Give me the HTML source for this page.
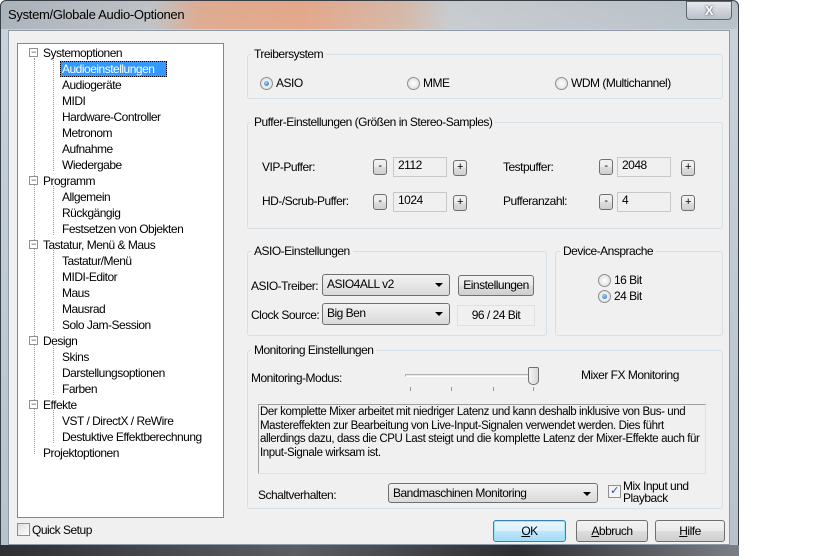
<!DOCTYPE html>
<html><head><meta charset="utf-8"><style>
*{box-sizing:border-box;margin:0;padding:0}
body{width:819px;height:556px;background:#fff;font-family:"Liberation Sans",sans-serif;font-size:12px;color:#000;position:relative;overflow:hidden;letter-spacing:-0.5px}
.a{position:absolute;white-space:nowrap}
#frame{left:0;top:0;width:739px;height:556px;background:linear-gradient(180deg,#a9b4bf 0,#c9d2db 30px,#b7c2cc 100%);border:1px solid #3a3f46;border-radius:6px 6px 0 0}
#tbar{left:1px;top:1px;width:736px;height:28px;background:linear-gradient(90deg,#a9b1b9 0,#c0c3c6 150px,#e3a98b 200px,#e8a584 300px,#d9b7a4 400px,#c9cdd0 450px,#b8c0c8 100%);opacity:.9;border-radius:6px 6px 0 0}
#bot{left:0;top:545px;width:739px;height:11px;background:linear-gradient(90deg,#2d2f33,#5a5e63 40%,#2d2f33 70%,#7a7f85)}
#client{left:8px;top:30px;width:722px;height:515px;background:#f0f0f0;border:1px solid #8e9aa6}
#close{left:686px;top:1px;width:46px;height:19px;border:1px solid #5c6670;border-radius:0 0 4px 4px;background:linear-gradient(#e6e9ec,#b8c0c8);color:#fff;font-weight:bold;text-align:center;line-height:17px;font-size:13px;text-shadow:0 0 2px #333}
#tree{left:17px;top:43px;width:207px;height:475px;background:#fff;border:1px solid #828790}
.exp{position:absolute;width:9px;height:9px;border:1px solid #919191;background:#fff;font-size:9px;line-height:6px;text-align:center;color:#333}
.g{position:absolute;border:1px solid #d5dfe5;border-radius:3px}
.gl{position:absolute;background:#f0f0f0;padding:0 3px}
.rad{position:absolute;width:13px;height:13px;border-radius:50%;border:1px solid #8e8f8f;background:radial-gradient(#fff,#d8d8d8)}
.rad.on::after{content:"";position:absolute;left:3px;top:3px;width:5px;height:5px;border-radius:50%;background:radial-gradient(circle at 40% 35%,#9fd8ff,#1b63b0)}
.btn{position:absolute;border:1px solid #707070;border-radius:3px;background:linear-gradient(#f2f2f2 0,#ebebeb 50%,#dddddd 51%,#cfcfcf);text-align:center}
.sm{width:14px;height:16px;font-size:11px;line-height:13px}
.fld{position:absolute;border:1px solid #c8c8c8;background:#f0f0f0;padding-left:4px}
.cmb{position:absolute;border:1px solid #707070;border-radius:3px;background:linear-gradient(#f2f2f2,#e6e6e6 50%,#dadada);padding-left:4px}
.cmb::after{content:"";position:absolute;right:6px;top:8px;border:4px solid transparent;border-top:4px solid #000;border-bottom:0}
.dl{position:absolute;border-left:1px dotted #999}
</style></head><body>
<div class="a" id="frame"></div>
<div class="a" id="tbar"></div>
<div class="a" style="left:8px;top:7px;font-size:13px;letter-spacing:-0.3px">System/Globale Audio-Optionen</div>
<div class="a" id="close">X</div>
<div class="a" id="bot"></div>
<div class="a" id="client"></div>

<div class="a" id="tree">
<div class="dl" style="left:16px;top:14px;height:396px"></div>
<div class="dl" style="left:35px;top:14px;height:113px"></div>
<div class="dl" style="left:35px;top:142px;height:49px"></div>
<div class="dl" style="left:35px;top:206px;height:81px"></div>
<div class="dl" style="left:35px;top:302px;height:49px"></div>
<div class="dl" style="left:35px;top:366px;height:33px"></div>
</div>

<div class="exp" style="left:29px;top:48px">−</div><div class="a" style="left:43px;top:46px">Systemoptionen</div>
<div class="a" style="left:60px;top:61px;width:107px;height:16px;background:#3399ff;outline:1px dotted #000;outline-offset:-1px"></div>
<div class="a" style="left:62px;top:62px;color:#fff">Audioeinstellungen</div>
<div class="a" style="left:62px;top:78px">Audiogeräte</div>
<div class="a" style="left:62px;top:94px">MIDI</div>
<div class="a" style="left:62px;top:110px">Hardware-Controller</div>
<div class="a" style="left:62px;top:126px">Metronom</div>
<div class="a" style="left:62px;top:142px">Aufnahme</div>
<div class="a" style="left:62px;top:158px">Wiedergabe</div>
<div class="exp" style="left:29px;top:176px">−</div><div class="a" style="left:43px;top:174px">Programm</div>
<div class="a" style="left:62px;top:190px">Allgemein</div>
<div class="a" style="left:62px;top:206px">Rückgängig</div>
<div class="a" style="left:62px;top:222px">Festsetzen von Objekten</div>
<div class="exp" style="left:29px;top:240px">−</div><div class="a" style="left:43px;top:238px">Tastatur, Menü &amp; Maus</div>
<div class="a" style="left:62px;top:254px">Tastatur/Menü</div>
<div class="a" style="left:62px;top:270px">MIDI-Editor</div>
<div class="a" style="left:62px;top:286px">Maus</div>
<div class="a" style="left:62px;top:302px">Mausrad</div>
<div class="a" style="left:62px;top:318px">Solo Jam-Session</div>
<div class="exp" style="left:29px;top:336px">−</div><div class="a" style="left:43px;top:334px">Design</div>
<div class="a" style="left:62px;top:350px">Skins</div>
<div class="a" style="left:62px;top:366px">Darstellungsoptionen</div>
<div class="a" style="left:62px;top:382px">Farben</div>
<div class="exp" style="left:29px;top:400px">−</div><div class="a" style="left:43px;top:398px">Effekte</div>
<div class="a" style="left:62px;top:414px">VST / DirectX / ReWire</div>
<div class="a" style="left:62px;top:430px">Destuktive Effektberechnung</div>
<div class="a" style="left:43px;top:446px">Projektoptionen</div>

<div class="a" style="left:17px;top:523px;width:13px;height:13px;border:1px solid #8e8f8f;background:linear-gradient(135deg,#ddd,#fff)"></div>
<div class="a" style="left:32px;top:523px">Quick Setup</div>

<div class="g" style="left:247px;top:54px;width:476px;height:45px"></div>
<div class="gl" style="left:251px;top:47px">Treibersystem</div>
<div class="rad on" style="left:260px;top:77px"></div><div class="a" style="left:276px;top:76px">ASIO</div>
<div class="rad" style="left:407px;top:77px"></div><div class="a" style="left:423px;top:76px">MME</div>
<div class="rad" style="left:555px;top:77px"></div><div class="a" style="left:571px;top:76px">WDM (Multichannel)</div>

<div class="g" style="left:247px;top:122px;width:476px;height:107px"></div>
<div class="gl" style="left:251px;top:115px">Puffer-Einstellungen (Größen in Stereo-Samples)</div>
<div class="a" style="left:262px;top:160px">VIP-Puffer:</div>
<div class="btn sm" style="left:373px;top:159px">-</div><div class="fld" style="left:393px;top:157px;width:54px;height:20px">2112</div><div class="btn sm" style="left:453px;top:160px">+</div>
<div class="a" style="left:503px;top:160px">Testpuffer:</div>
<div class="btn sm" style="left:599px;top:159px">-</div><div class="fld" style="left:617px;top:157px;width:54px;height:20px">2048</div><div class="btn sm" style="left:681px;top:160px">+</div>
<div class="a" style="left:262px;top:194px">HD-/Scrub-Puffer:</div>
<div class="btn sm" style="left:373px;top:194px">-</div><div class="fld" style="left:393px;top:192px;width:54px;height:20px">1024</div><div class="btn sm" style="left:453px;top:195px">+</div>
<div class="a" style="left:503px;top:194px">Pufferanzahl:</div>
<div class="btn sm" style="left:599px;top:194px">-</div><div class="fld" style="left:617px;top:192px;width:54px;height:20px">4</div><div class="btn sm" style="left:681px;top:195px">+</div>

<div class="g" style="left:247px;top:251px;width:300px;height:85px"></div>
<div class="gl" style="left:251px;top:244px">ASIO-Einstellungen</div>
<div class="a" style="left:251px;top:279px">ASIO-Treiber:</div>
<div class="cmb" style="left:322px;top:274px;width:128px;height:22px;line-height:19px">ASIO4ALL v2</div>
<div class="btn" style="left:458px;top:275px;width:76px;height:21px;line-height:19px">Einstellungen</div>
<div class="a" style="left:251px;top:308px">Clock Source:</div>
<div class="cmb" style="left:322px;top:303px;width:128px;height:22px;line-height:19px">Big Ben</div>
<div class="fld" style="left:457px;top:305px;width:78px;height:21px;line-height:19px;text-align:center;padding:0;border-color:#e0e0e0">96 / 24 Bit</div>

<div class="g" style="left:555px;top:251px;width:168px;height:85px"></div>
<div class="gl" style="left:560px;top:244px">Device-Ansprache</div>
<div class="rad" style="left:598px;top:274px"></div><div class="a" style="left:614px;top:273px">16 Bit</div>
<div class="rad on" style="left:598px;top:290px"></div><div class="a" style="left:614px;top:289px">24 Bit</div>

<div class="g" style="left:247px;top:350px;width:476px;height:159px"></div>
<div class="gl" style="left:251px;top:343px">Monitoring Einstellungen</div>
<div class="a" style="left:251px;top:371px">Monitoring-Modus:</div>
<div class="a" style="left:405px;top:374px;width:134px;height:3px;border:1px solid #b0b0b0;border-bottom-color:#fff;background:#e8e8e8"></div>
<div class="a" style="left:528px;top:367px;width:11px;height:18px;border:1px solid #707070;border-radius:2px 2px 5px 5px;background:linear-gradient(90deg,#f4f4f4,#d8d8d8)"></div>
<div class="a" style="left:410px;top:387px;width:1px;height:4px;background:#999"></div>
<div class="a" style="left:451px;top:387px;width:1px;height:4px;background:#999"></div>
<div class="a" style="left:493px;top:387px;width:1px;height:4px;background:#999"></div>
<div class="a" style="left:533px;top:387px;width:1px;height:4px;background:#999"></div>
<div class="a" style="left:581px;top:368px">Mixer FX Monitoring</div>
<div class="a" style="left:258px;top:404px;width:448px;height:70px;border:1px solid #a0a0a0;border-right-color:#e0e0e0;border-bottom-color:#e0e0e0;background:#f0f0f0;padding:1px 0 0 1px;white-space:normal;font-size:11.5px;line-height:13.5px;letter-spacing:-0.4px">Der komplette Mixer arbeitet mit niedriger Latenz und kann deshalb inklusive von Bus- und<br>Mastereffekten zur Bearbeitung von Live-Input-Signalen verwendet werden. Dies führt<br>allerdings dazu, dass die CPU Last steigt und die komplette Latenz der Mixer-Effekte auch für<br>Input-Signale wirksam ist.</div>
<div class="a" style="left:258px;top:488px">Schaltverhalten:</div>
<div class="cmb" style="left:388px;top:483px;width:210px;height:20px;line-height:18px">Bandmaschinen Monitoring</div>
<div class="a" style="left:608px;top:485px;width:13px;height:13px;border:1px solid #8e8f8f;background:#f4f4f4;color:#2a4d9b;font-size:11px;line-height:11px;text-align:center">✓</div>
<div class="a" style="left:623px;top:480px;line-height:12px">Mix Input und<br>Playback</div>

<div class="btn" style="left:493px;top:520px;width:73px;height:22px;line-height:20px;border-color:#3c7fb1;box-shadow:inset 0 0 0 1px #9de4fa;background:linear-gradient(#eaf6fd,#d9f0fc 50%,#bee6fd 51%,#a7d9f5)"><u>O</u>K</div>
<div class="btn" style="left:576px;top:520px;width:72px;height:22px;line-height:20px"><u>A</u>bbruch</div>
<div class="btn" style="left:655px;top:520px;width:70px;height:22px;line-height:20px"><u>H</u>ilfe</div>
</body></html>
